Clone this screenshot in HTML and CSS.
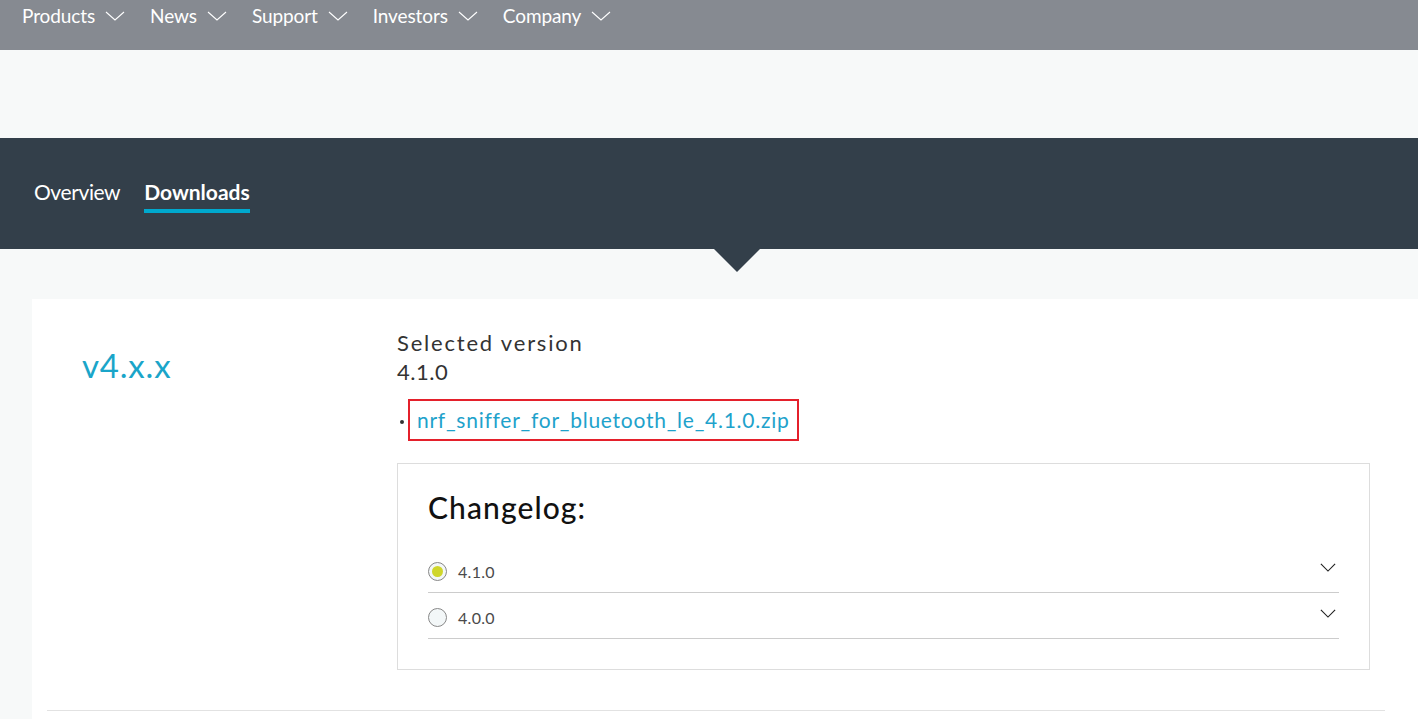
FILE: index.html
```html
<!DOCTYPE html>
<html>
<head>
<meta charset="utf-8">
<link rel="stylesheet" href="styles.css">
</head>
<body>
<header class="topnav">
  <div class="nav-item">Products <svg class="chev" viewBox="0 0 20 10"><path d="M1 1 L10 9 L19 1" /></svg></div>
  <div class="nav-item">News <svg class="chev" viewBox="0 0 20 10"><path d="M1 1 L10 9 L19 1" /></svg></div>
  <div class="nav-item">Support <svg class="chev" viewBox="0 0 20 10"><path d="M1 1 L10 9 L19 1" /></svg></div>
  <div class="nav-item">Investors <svg class="chev" viewBox="0 0 20 10"><path d="M1 1 L10 9 L19 1" /></svg></div>
  <div class="nav-item">Company <svg class="chev" viewBox="0 0 20 10"><path d="M1 1 L10 9 L19 1" /></svg></div>
</header>
<div class="spacer"></div>
<div class="tabbar">
  <div class="tab">Overview</div>
  <div class="tab active">Downloads</div>
  <div class="pointer"></div>
</div>
<main class="main">
  <section class="card">
    <div class="card-grid">
      <div class="ver-col"><div class="ver">v4.x.x</div></div>
      <div class="detail">
        <div class="sel-label">Selected version</div>
        <div class="sel-ver">4.1.0</div>
        <ul class="files">
          <li><a class="file-link">nrf_sniffer_for_bluetooth_le_4.1.0.zip</a></li>
        </ul>
        <div class="changelog">
          <h2 class="cl-title">Changelog:</h2>
          <div class="cl-row">
            <span class="radio checked"></span>
            <span class="cl-ver">4.1.0</span>
            <svg class="cl-chev" viewBox="0 0 18 10"><path d="M1 1 L9 9 L17 1" /></svg>
          </div>
          <div class="cl-row">
            <span class="radio"></span>
            <span class="cl-ver">4.0.0</span>
            <svg class="cl-chev" viewBox="0 0 18 10"><path d="M1 1 L9 9 L17 1" /></svg>
          </div>
        </div>
      </div>
    </div>
    <div class="divider"></div>
  </section>
</main>
</body>
</html>
```

FILE: styles.css
```css
* { box-sizing: border-box; }
html, body { margin: 0; padding: 0; }
body {
  font-family: Lato, "Open Sans", sans-serif;
  background: #f7f9f9;
  overflow: hidden;
  height: 719px;
}
.topnav {
  height: 50px;
  background: #868a91;
  display: flex;
  align-items: flex-start;
  padding: 4px 0 0 22px;
  gap: 25px;
}
.nav-item {
  color: #fff;
  font-size: 19px;
  line-height: 24px;
  display: flex;
  align-items: center;
  gap: 10px;
  letter-spacing: -0.1px;
}
.chev {
  width: 20px;
  height: 10px;
  fill: none;
  stroke: #fff;
  stroke-width: 1.1;
}
.spacer { height: 88px; }
.tabbar {
  position: relative;
  height: 111px;
  background: #333f4a;
  display: flex;
  align-items: flex-start;
  padding: 40px 0 0 34px;
  gap: 24px;
}
.tab {
  color: #fff;
  font-size: 21px;
  line-height: 28px;
  padding-bottom: 3px;
  border-bottom: 4px solid transparent;
  letter-spacing: -0.4px;
}
.tab.active {
  font-weight: 700;
  letter-spacing: 0;
  border-bottom-color: #00a9ce;
}
.pointer {
  position: absolute;
  left: 714px;
  top: 111px;
  width: 0;
  height: 0;
  border-left: 23px solid transparent;
  border-right: 23px solid transparent;
  border-top: 23px solid #333f4a;
}
.main {
  padding: 50px 0 0 32px;
}
.card {
  background: #fff;
  padding: 30px 0 8px 0;
  height: 430px;
}
.card-grid {
  display: grid;
  grid-template-columns: 365px 973px;
}
.ver-col { padding: 16px 0 0 50px; }
.ver {
  color: #1aa5c9;
  font-size: 33px;
  line-height: 40px;
  letter-spacing: 0.8px;
}
.detail { color: #333; }
.sel-label {
  font-size: 22px;
  line-height: 28px;
  letter-spacing: 1.8px;
}
.sel-ver {
  font-size: 22px;
  line-height: 30px;
  letter-spacing: 0.5px;
}
.files {
  margin: 12px 0 0 0;
  padding: 0 0 0 3px;
  list-style: none;
}
.files li {
  display: flex;
  align-items: center;
  gap: 4px;
}
.files li::before {
  content: "";
  width: 4px;
  height: 4px;
  border-radius: 50%;
  background: #333;
  margin-top: 4px;
}
.file-link {
  color: #1ea2cb;
  font-size: 21px;
  line-height: 38px;
  border: 2px solid #e4202b;
  padding: 0 8px 0 7px;
  letter-spacing: 0.75px;
}
.changelog {
  margin-top: 22px;
  border: 1px solid #dddddd;
  padding: 24px 30px 30px 30px;
  height: 207px;
}
.cl-title {
  margin: 0 0 21px 0;
  font-size: 30px;
  line-height: 38px;
  font-weight: 500;
  color: #111;
  letter-spacing: 1.1px;
}
.cl-row {
  display: flex;
  align-items: center;
  height: 46px;
  border-bottom: 1.5px solid #cccccc;
  gap: 11px;
  padding-top: 3px;
}
.radio {
  width: 19px;
  height: 19px;
  border-radius: 50%;
  border: 1px solid #888;
  background: #f3f7f8;
  display: flex;
  align-items: center;
  justify-content: center;
}
.radio.checked::after {
  content: "";
  width: 11px;
  height: 11px;
  border-radius: 50%;
  background: #cfd62b;
}
.cl-ver {
  font-size: 16px;
  color: #4a4a4a;
  flex: 1;
  letter-spacing: 0.3px;
}
.cl-chev {
  width: 16px;
  height: 9px;
  fill: none;
  stroke: #222;
  stroke-width: 1.3;
  margin-right: 3px;
  margin-top: -8px;
}
.divider {
  margin: 40px 33px 0 15px;
  border-top: 1px solid #e2e2e2;
}
```
